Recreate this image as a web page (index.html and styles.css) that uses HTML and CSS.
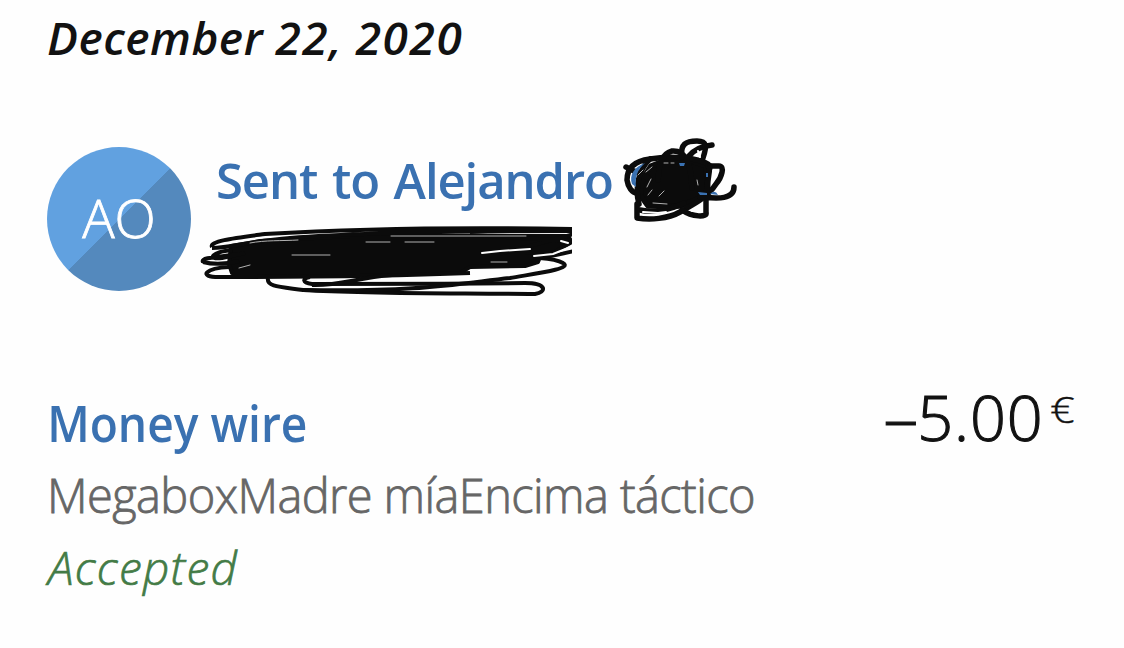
FILE: index.html
```html
<!DOCTYPE html>
<html lang="en">
<head>
<meta charset="utf-8">
<title>Transaction detail</title>
<link rel="stylesheet" href="styles.css">
</head>
<body>
<main class="page">
  <h1 class="date">December <span class="digits">22, 2020</span></h1>
  <section class="recipient">
    <div class="avatar"><span>AO</span></div>
    <div class="recipient-name">Sent to Alejandro</div>
    <svg class="redaction" width="560" height="180" viewBox="190 130 560 180" aria-hidden="true">
      <clipPath id="phone-edge"><rect x="190" y="215" width="382" height="95"/></clipPath>
      <g class="ink ink-name">
        <path class="fill" d="M651 166L664 161L692 161L706 166L708 190L700 198L680 206L648 206L640 195L643 178Z"/>
        <path d="M626 167L650 179M637 193C632 193 628 187 627 180C627 168 634 161 650 159C672 155 698 158 708 164"/>
        <path d="M658 180C659 165 661 154 672 151C684 150 691 160 692 188M688 157C694 149 702 146 712 145"/>
        <path d="M682 157C680 144 686 141 697 141C707 141 707 146 703 158"/>
        <path d="M650 159C640 168 634 186 639 204M640 210C652 213 670 210 684 203"/>
        <path d="M637 204V218C650 220 668 219 680 212C694 204 707 198 716 184C722 177 725 166 719 166L708 166"/>
        <path d="M682 210C692 217 708 218 706 212V195L710 166M700 197C714 198 734 201 734 187"/>
      </g>
      <g class="name-peek">
        <path d="M632 184C629 175 634 167 645 163C637 170 635 177 636 187ZM679 163h6l-1 3h-4zM698 192l9 1v2h-7zM710 194q5-5 8 1zM706 173h2v4h-2z"/>
      </g>
      <g class="glints"><path d="M646 172l6-5M638 175l5-5M647 187l4-8M648 195l4-5M659 196l5-5M653 203l14 1M664 163h4M671 163h3M697 180l1 5"/><path class="gap" d="M643 212L658 213L666 212M692 211H702M698 151L700 157M713 171L717 171L714 179"/></g>
      <g clip-path="url(#phone-edge)">
        <g class="ink ink-phone">
          <path class="fill" d="M231 246L260 241L350 236L520 236L568 236L572 242L553 253L540 257L538 262L525 266L470 267L460 273L232 273L229 264Z"/>
          <path d="M212 247C209 241 235 238 265 234C350 229 460 227 574 229M212 248C230 248 250 241 290 238C360 232 460 231 574 231"/>
          <path d="M232 250C212 252 206 260 222 258L245 253M203 262C200 257 222 257 239 254M203 262C214 265 227 264 239 261"/>
          <path d="M229 267C206 268 197 277 219 277C310 277 420 275 470 273"/>
          <path d="M268 278C266 287 281 287 303 290C370 294 450 293 535 294C547 292 547 283 525 283C455 284 375 284 312 284C302 283 302 278 310 277"/>
          <path d="M303 290C420 292 455 284 510 278C532 274 574 269 563 263C553 257 535 259 525 256"/>
          <path d="M312 285C340 286 355 278 392 275M500 254L574 234M520 257C545 257 545 258 574 251M470 235L574 241"/>
        </g>
        <g class="glints">
          <path d="M250 243C265 240 282 241 298 240M391 236H526M292 255H330M366 242H390M405 242H434M239 268L250 265M491 262H507"/>
          <path class="gap" d="M482 253L500 251L530 249M534 256L553 254L573 246M561 241L568 243"/>
        </g>
      </g>
    </svg>
  </section>
  <section class="movement">
    <div class="details">
      <h2 class="title">Money wire</h2>
      <p class="concept">MegaboxMadre míaEncima táctico</p>
      <p class="status">Accepted</p>
    </div>
    <div class="amount"><span class="minus">–</span><span class="value">5.00</span><span class="currency">€</span></div>
  </section>
</main>
</body>
</html>
```
FILE: styles.css
```css
* { box-sizing: border-box; margin: 0; }
body { background: #fefefe; font-family: "Open Sans", "Noto Sans", sans-serif; overflow: hidden; }
.page { width: 1124px; height: 648px; padding: 1px 0 0 47px; }
.date, .title, .concept, .status, .recipient-name { line-height: 72px; white-space: nowrap; }
.date { font-size: 46px; font-weight: 600; font-style: italic; letter-spacing: .5px; color: #121212; }
.digits { letter-spacing: 1.6px; word-spacing: -1px; }
.recipient { position: relative; display: flex; gap: 25px; height: 240px; margin-top: 74px; }
.avatar {
  display: flex; align-items: center; justify-content: center;
  width: 144px; height: 144px; border-radius: 50%; padding-bottom: 5px;
  background: linear-gradient(135deg, #61a1e0 50%, #5489bd 50.3%);
  color: #fff; font-size: 54px; font-weight: 300; line-height: 72px;
  -webkit-text-stroke: .8px #fff;
}
.recipient-name { margin-top: -3px; font-size: 49px; font-weight: 600; letter-spacing: -1.1px; word-spacing: 3px; color: #3a71b1; }
.redaction { position: absolute; left: 143px; top: -17px; }
.redaction path { fill: none; stroke-linecap: round; stroke-linejoin: round; }
.ink path { stroke: #0b0b0b; }
.ink .fill { fill: #0b0b0b; }
.ink-name path { stroke-width: 5.5; }
.ink-phone path { stroke-width: 4; stroke-linecap: butt; }
.name-peek path { fill: #3a71b1; stroke: none; }
.glints path { stroke: #c4c4c4; stroke-width: .9; }
.glints .gap { stroke: #fefefe; stroke-width: 2; }
.movement { display: flex; justify-content: space-between; padding-right: 49px; }
.title { font-size: 50px; font-weight: 600; color: #3a71b1; transform: scaleX(.923); transform-origin: 2px 50%; }
.concept { font-size: 47px; font-weight: 300; letter-spacing: -.6px; color: #666; -webkit-text-stroke: .8px #666; }
.status { padding-left: 1px; font-size: 46px; font-weight: 300; font-style: italic; letter-spacing: 1.3px; color: #437b46; -webkit-text-stroke: .7px #437b46; }
.amount { display: flex; align-items: flex-start; margin-top: -6px; font-weight: 300; color: #121212; -webkit-text-stroke: 1.1px #121212; }
.minus, .value { font-size: 63px; line-height: 72px; }
.minus { transform: scaleX(1.1); }
.value { margin-left: 1px; letter-spacing: .8px; }
.currency { margin-left: 11px; font-size: 36px; line-height: 57px; transform: scaleX(1.2); transform-origin: right; -webkit-text-stroke-width: .4px; }
```
